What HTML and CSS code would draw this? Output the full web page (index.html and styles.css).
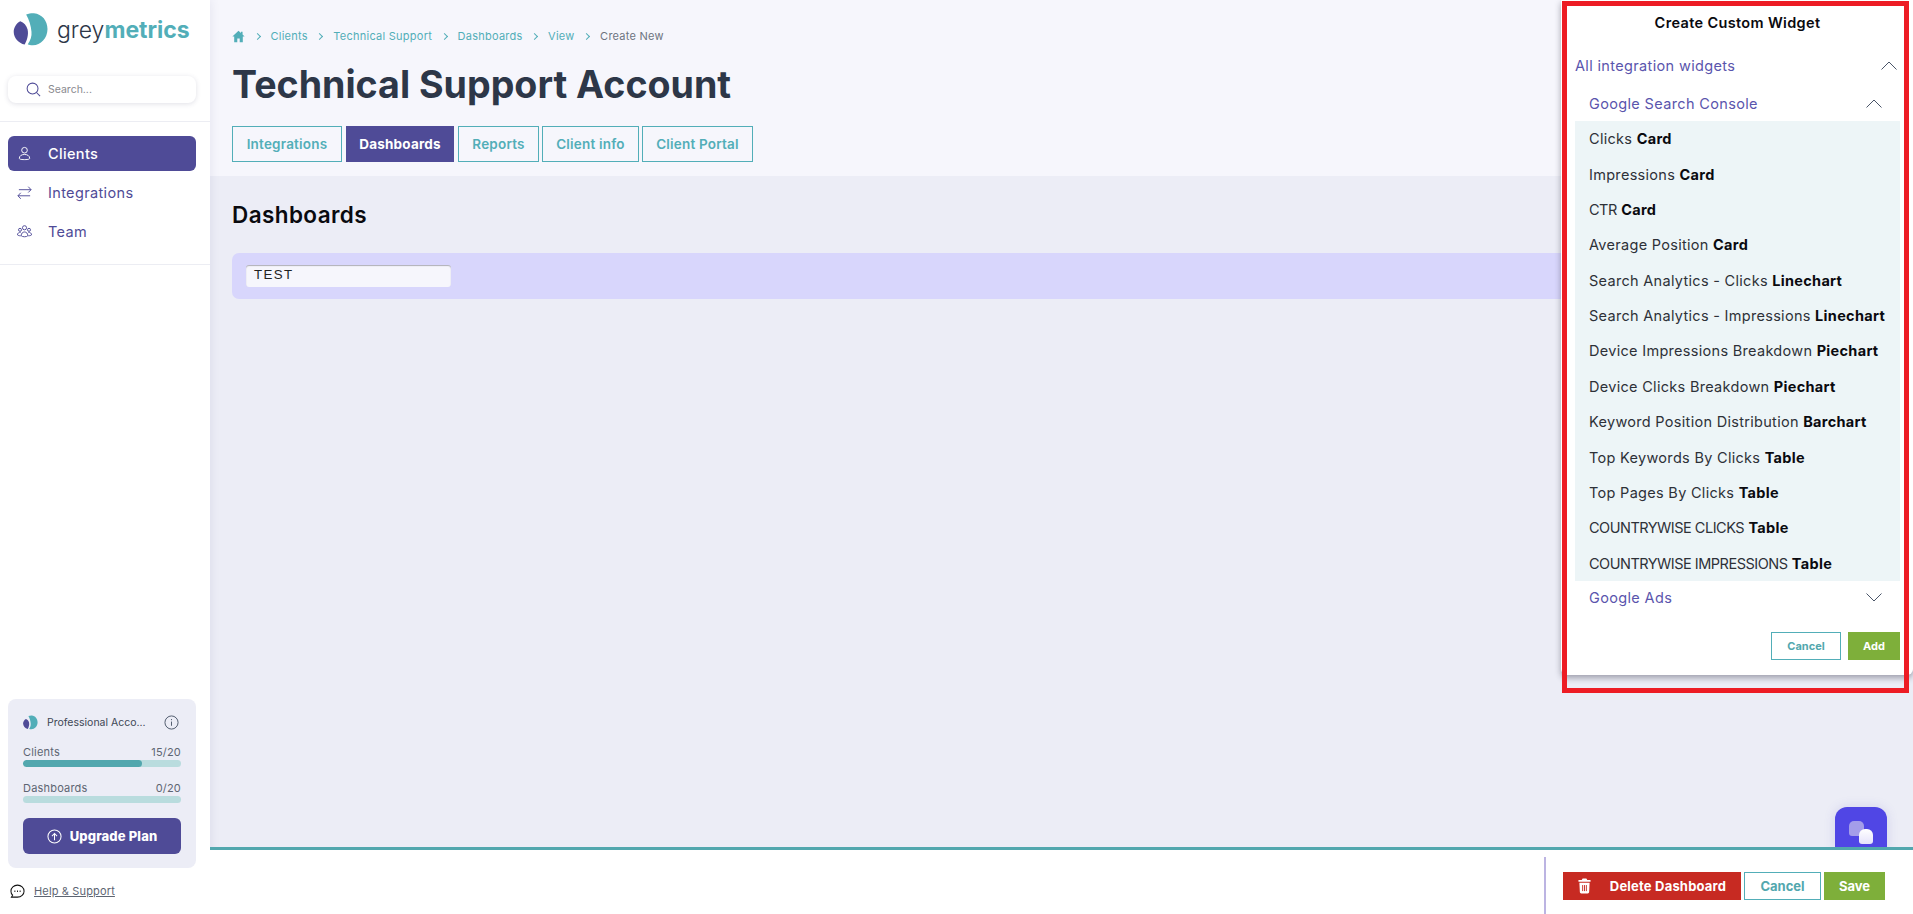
FILE: index.html
```html
<!DOCTYPE html>
<html lang="en">
<head>
<meta charset="utf-8">
<title>Technical Support Account</title>
<link rel="stylesheet" href="styles.css">
</head>
<body>
<div class="app">
  <aside class="sidebar">
    <div class="logo">
      <svg class="logo-mark" viewBox="0 0 36 34"><path fill="#52aeb8" d="M13 1.500C16 .3 19 0 21 .2 29.500 1 35 8 35 16.500 35 26 28 33 20 33.300c-2 .1-4-.4-5.300-1 2.800-4 4.300-8.500 3.800-13C18 13 16 6.500 13 1.500z"/><path fill="#4f4b97" d="M7 8.500c3.500 1.300 6.500 4.300 7.500 8.500 1.200 5.300-.5 11-3 15.500C5 31 .3 25.500.2 19.500.1 15 3 10.500 7 8.500z"/></svg>
      <span class="logo-text">grey<b>metrics</b></span>
    </div>
    <div class="search">
      <svg class="search-icon" viewBox="0 0 16 16" fill="none" stroke="#4f4b97" stroke-width="1.100"><circle cx="7" cy="7" r="5.800"/><path d="M11.200 11.200 15 15"/></svg>
      <span>Search...</span>
    </div>
    <nav class="nav">
      <a class="nav-item active"><svg viewBox="0 0 16 16" fill="none" stroke="currentColor" stroke-width="1"><circle cx="8" cy="4.500" r="3"/><path d="M2.500 13c0-2.500 2.500-4 5.500-4s5.500 1.500 5.500 4c0 1-1 1.500-5.500 1.500S2.500 14 2.500 13z"/></svg>Clients</a>
      <a class="nav-item"><svg viewBox="0 0 16 16" fill="none" stroke="currentColor" stroke-width="1"><path d="M2 5h13M12 1.800 15 5l-3 3M14 11.500H1M4 8.300l-3 3.200 3 3.200"/></svg>Integrations</a>
      <a class="nav-item"><svg viewBox="0 0 16 16" fill="none" stroke="currentColor" stroke-width="1"><circle cx="8" cy="4" r="2.200"/><circle cx="3.200" cy="6.200" r="1.600"/><circle cx="12.800" cy="6.200" r="1.600"/><path d="M4.500 12.500c0-2.500 1.500-4 3.500-4s3.500 1.500 3.500 4c-1 1.500-6 1.500-7 0zM4 8.800c-2 0-3.500 1-3.500 2.800.5.700 2 1 3.500 1M12 8.800c2 0 3.500 1 3.500 2.800-.5.700-2 1-3.500 1"/></svg>Team</a>
    </nav>
    <div class="side-spacer"></div>
    <div class="plan">
      <div class="plan-head">
        <svg class="plan-logo" viewBox="0 0 36 34"><path fill="#52aeb8" d="M13 1.500C16 .3 19 0 21 .2 29.500 1 35 8 35 16.500 35 26 28 33 20 33.300c-2 .1-4-.4-5.300-1 2.800-4 4.300-8.500 3.800-13C18 13 16 6.500 13 1.500z"/><path fill="#4f4b97" d="M7 8.500c3.500 1.300 6.500 4.300 7.500 8.500 1.200 5.300-.5 11-3 15.500C5 31 .3 25.500.2 19.500.1 15 3 10.500 7 8.500z"/></svg>
        <span class="plan-name">Professional Acco...</span>
        <svg class="info" viewBox="0 0 16 16" fill="none" stroke="#4a5568" stroke-width="1"><circle cx="8" cy="8" r="7"/><path d="M8 7v4.500M8 4.300v1.200"/></svg>
      </div>
      <div class="meter-label"><span>Clients</span><span>15/20</span></div>
      <div class="meter"><div class="meter-fill" style="width:75%"></div></div>
      <div class="meter-label second"><span>Dashboards</span><span>0/20</span></div>
      <div class="meter"></div>
      <a class="upgrade"><svg viewBox="0 0 16 16" fill="none" stroke="#fff" stroke-width="1.100"><circle cx="8" cy="8" r="7"/><path d="M8 12V5M5.300 7.500 8 4.800l2.700 2.700"/></svg>Upgrade Plan</a>
    </div>
    <div class="help">
      <svg viewBox="0 0 16 16" fill="none" stroke="#111" stroke-width="1.100"><path d="M8 1.200c3.900 0 7 2.800 7 6.400s-3.100 6.400-7 6.400H1.500l1.300-2.100C1.700 10.800 1 9.300 1 7.600 1 4 4.100 1.200 8 1.200z"/><path stroke-width="1.500" d="M4.700 7.700h1M7.500 7.700h1M10.300 7.700h1"/></svg>
      <a>Help &amp; Support</a>
    </div>
  </aside>

  <main class="main">
    <header class="head">
      <div class="crumbs">
        <svg class="home" viewBox="0 0 16 16"><path fill="#52aeb8" d="M8 1 .5 8h2.200v7h3.800v-4.500h3V15h3.800V8h2.200l-2.500-2.400V2h-2v1.700z"/></svg>
        <i></i><a>Clients</a><i></i><a>Technical Support</a><i></i><a>Dashboards</a><i></i><a>View</a><i></i><span>Create New</span>
      </div>
      <h1>Technical Support Account</h1>
      <div class="tabs">
        <a class="tab t1">Integrations</a>
        <a class="tab t2 on">Dashboards</a>
        <a class="tab t3">Reports</a>
        <a class="tab t4">Client info</a>
        <a class="tab t5">Client Portal</a>
      </div>
    </header>
    <section class="content">
      <h2>Dashboards</h2>
      <div class="dash-row"><div class="dash-input">TEST</div></div>
    </section>
    <footer class="bottom">
      <div class="bottom-actions">
        <a class="btn delete"><svg viewBox="0 0 14 16"><path fill="#fff" d="M5 0h4l1 1.500h3.500v2H.5v-2H4zM1.500 4.500h11L12 14.500c0 1-.7 1.500-1.500 1.500h-7c-.8 0-1.500-.5-1.500-1.500z"/><path stroke="#c72a22" stroke-width="1" d="M5 7v6.500M7 7v6.500M9 7v6.500"/></svg><span>Delete Dashboard</span></a>
        <a class="btn outline">Cancel</a>
        <a class="btn green">Save</a>
      </div>
    </footer>
  </main>
</div>

<div class="fab"><span class="fab-back"></span><span class="fab-front"></span></div>

<aside class="panel">
  <h3>Create Custom Widget</h3>
  <div class="acc lvl1"><span>All integration widgets</span><svg viewBox="0 0 16 9" fill="none" stroke="#4a5568" stroke-width="1"><path d="M.5 8.500 8 1l7.500 7.500"/></svg></div>
  <div class="acc lvl2"><span>Google Search Console</span><svg viewBox="0 0 16 9" fill="none" stroke="#4a5568" stroke-width="1"><path d="M.5 8.500 8 1l7.500 7.500"/></svg></div>
  <ul class="list">
    <li>Clicks <b>Card</b></li>
    <li>Impressions <b>Card</b></li>
    <li class="caps">CTR <b>Card</b></li>
    <li>Average Position <b>Card</b></li>
    <li>Search Analytics - Clicks <b>Linechart</b></li>
    <li>Search Analytics - Impressions <b>Linechart</b></li>
    <li>Device Impressions Breakdown <b>Piechart</b></li>
    <li>Device Clicks Breakdown <b>Piechart</b></li>
    <li>Keyword Position Distribution <b>Barchart</b></li>
    <li>Top Keywords By Clicks <b>Table</b></li>
    <li>Top Pages By Clicks <b>Table</b></li>
    <li class="caps">COUNTRYWISE CLICKS <b>Table</b></li>
    <li class="caps">COUNTRYWISE IMPRESSIONS <b>Table</b></li>
  </ul>
  <div class="acc lvl2 ads"><span>Google Ads</span><svg viewBox="0 0 16 9" fill="none" stroke="#4a5568" stroke-width="1"><path d="M.5.5 8 8l7.500-7.500"/></svg></div>
  <div class="panel-actions">
    <a class="pbtn pcancel">Cancel</a>
    <a class="pbtn padd">Add</a>
  </div>
</aside>
<div class="annotation"></div>
</body>
</html>
```
FILE: styles.css
```css
* { box-sizing: border-box; }
html, body { margin: 0; height: 100%; overflow: hidden; }
body { font-family: Inter, "Noto Sans", sans-serif; color: #2d3748; background: #ecedf6; }
a { text-decoration: none; }
svg { display: block; flex: none; }

.app { display: flex; height: 914px; }

.sidebar { width: 210px; flex: none; background: #fff; display: flex; flex-direction: column; position: relative; z-index: 2; box-shadow: 2px 0 8px rgba(80, 80, 130, .08); }
.logo { display: flex; align-items: center; height: 76px; padding: 0 0 17px 13px; gap: 8px; }
.logo-mark { width: 36px; height: 33px; }
.logo-text { font-size: 23px; color: #2d3748; font-weight: 300; letter-spacing: 0; }
.logo-text b { color: #52aeb8; font-weight: 700; }
.search { margin: 0 14px 0 8px; height: 27px; border-radius: 8px; background: #fff; box-shadow: 0 1px 5px rgba(60, 60, 100, .16); display: flex; align-items: center; padding-left: 18px; gap: 7px; font-size: 10.500px; color: #8a8a8f; }
.search-icon { width: 15px; height: 15px; }
.nav { margin-top: 18px; border-top: 1px solid #ecedf3; border-bottom: 1px solid #ecedf3; padding: 14px 14px 14px 8px; height: 144px; display: flex; flex-direction: column; gap: 4px; }
.nav-item { height: 35px; display: flex; align-items: center; gap: 16px; padding-left: 9px; border-radius: 6px; font-size: 14.500px; letter-spacing: .35px; color: #4f4b97; padding-bottom: 1px; }
.nav-item svg { width: 15px; height: 15px; }
.nav-item.active { background: #4f4b97; color: #fff; font-weight: 500; }
.side-spacer { flex: 1; }
.plan { margin: 0 14px 0 8px; height: 169px; border-radius: 8px; background: #ecedf6; padding: 15px 15px 0; display: flex; flex-direction: column; }
.plan-head { display: flex; align-items: center; height: 16px; }
.plan-logo { width: 15px; height: 15px; }
.plan-name { margin-left: 9px; font-size: 10.500px; color: #3d4654; flex: 1; white-space: nowrap; }
.info { width: 15px; height: 15px; margin-right: 2px; }
.meter-label { display: flex; justify-content: space-between; margin-top: 15px; font-size: 11px; letter-spacing: .2px; line-height: 14px; color: #5d6572; }
.meter-label.second { margin-top: 14px; }
.meter { height: 7px; margin-top: 1px; border-radius: 4px; background: #b9dcde; overflow: hidden; }
.meter-fill { height: 100%; background: #52a7ae; border-radius: 4px; }
.upgrade { margin-top: 15px; height: 36px; border-radius: 6px; background: #4f4b97; color: #fff; font-size: 13px; font-weight: 800; letter-spacing: .15px; display: flex; align-items: center; justify-content: center; gap: 8px; }
.upgrade svg { width: 15px; height: 15px; }
.help { height: 46px; display: flex; align-items: center; padding-left: 10px; gap: 9px; font-size: 11px; letter-spacing: .15px; color: #5d6572; }
.help svg { width: 15px; height: 15px; }
.help a { text-decoration: underline; }

.main { flex: 1; min-width: 0; display: flex; flex-direction: column; }
.head { height: 176px; flex: none; background: #f6f6fc; padding: 27px 0 0 22px; }
.crumbs { display: flex; align-items: center; height: 18px; font-size: 11px; letter-spacing: .25px; color: #52aeb8; }
.crumbs .home { width: 13px; height: 13px; }
.crumbs i { width: 5px; height: 5px; border-top: 1px solid #52aeb8; border-right: 1px solid #52aeb8; transform: rotate(45deg); margin: 0 11px 0 9.500px; }
.crumbs span { color: #6d7480; }
h1 { margin: 18px 0 0; font-size: 37.600px; line-height: 44px; font-weight: 700; color: #2d3748; letter-spacing: 0; }
.tabs { display: flex; margin-top: 19px; gap: 4px; }
.tab { height: 36px; display: flex; align-items: center; justify-content: center; border: 1px solid #52aeb8; color: #52aeb8; font-size: 13.500px; letter-spacing: .2px; font-weight: 600; }
.tab.t1 { width: 110px; }
.tab.t2 { width: 108px; }
.tab.t3 { width: 81px; }
.tab.t4 { width: 97px; margin-left: -1px; }
.tab.t5 { width: 111px; margin-left: -1px; }
.tab.on { background: #4f4b97; border-color: #4f4b97; color: #fff; font-weight: 700; }

.content { flex: 1; padding: 25px 0 0 22px; }
h2 { margin: 0; font-size: 22.500px; letter-spacing: .4px; line-height: 28px; font-weight: 600; color: #0a0a0f; }
.dash-row { margin-top: 24px; height: 46px; border-radius: 7px; background: #d8d6fc; padding: 12px 0 0 14px; }
.dash-input { width: 205px; height: 22px; border-radius: 3px; background: #f6f6fc; box-shadow: inset 0 1px 1px rgba(70, 70, 80, .4); padding: 2px 0 0 8px; font-family: "Liberation Sans", sans-serif; font-size: 13.300px; line-height: 15px; letter-spacing: 1.400px; color: #222; }

.bottom { height: 67px; flex: none; background: #fff; border-top: 3px solid #52a7ae; display: flex; justify-content: flex-end; padding-top: 7px; position: relative; z-index: 3; }
.bottom-actions { width: 369px; height: 57px; border-left: 2px solid #bcb4e2; padding: 15px 0 0 17px; display: flex; gap: 3px; }
.btn { height: 28px; display: flex; align-items: center; justify-content: center; font-size: 13px; font-weight: 700; color: #fff; }
.btn.delete { width: 178px; background: #c72a22; gap: 19px; letter-spacing: .2px; }
.btn.delete svg { width: 13px; height: 16px; }
.btn.outline { width: 77px; background: #fff; border: 1px solid #52aeb8; color: #52a7ae; }
.btn.green { width: 61px; background: #7eaf3a; }

.fab { position: absolute; left: 1835px; top: 807px; width: 52px; height: 44px; border-radius: 12px 12px 0 0; background: #5046e5; z-index: 2; box-shadow: 0 0 12px rgba(70, 60, 180, .15); }
.fab-back { position: absolute; left: 14px; top: 14px; width: 15px; height: 15px; border-radius: 5px 5px 3px 3px; background: #a49de9; }
.fab-front { position: absolute; left: 24px; top: 22px; width: 14px; height: 15px; border-radius: 6px 6px 3px 3px; background: linear-gradient(#fff, #e6e3fb); }

.panel { position: absolute; left: 1561px; top: 0; width: 352px; height: 675px; background: #fff; border-radius: 0 0 6px 6px; box-shadow: 0 3px 6px rgba(40, 40, 60, .4); z-index: 4; padding: 0 13px 0 14px; }
.panel h3 { margin: 0; height: 45px; display: flex; align-items: center; justify-content: center; font-size: 14.500px; letter-spacing: .35px; font-weight: 600; color: #0a0a0f; }
.acc { display: flex; align-items: center; justify-content: space-between; color: #5a55ad; font-size: 14.500px; letter-spacing: .35px; }
.acc svg { width: 16px; height: 9px; }
.lvl1 { height: 41px; }
.lvl2 { height: 35px; padding: 0 18px 0 14px; }
.lvl1 svg { margin-right: 3px; }
.list { list-style: none; margin: 0; padding: 0; background: #edf5f7; }
.list li { height: 35.380px; display: flex; align-items: center; gap: .3em; padding-left: 14px; font-size: 14.500px; letter-spacing: .3px; color: #2d3138; white-space: nowrap; }
.list li.caps { letter-spacing: -.5px; }
.list b { font-weight: 700; color: #0a0a0f; letter-spacing: .3px; }
.ads { height: 34px; }
.panel-actions { display: flex; justify-content: flex-end; gap: 7px; margin-top: 17px; }
.pbtn { height: 28px; display: flex; align-items: center; justify-content: center; font-size: 11px; font-weight: 700; }
.pcancel { width: 70px; border: 1px solid #52aeb8; color: #52a7ae; }
.padd { width: 52px; background: #7eaf3a; color: #fff; }

.annotation { position: absolute; left: 1562px; top: 1px; width: 347px; height: 692px; border: 5px solid #ed1c24; z-index: 5; pointer-events: none; }
```
